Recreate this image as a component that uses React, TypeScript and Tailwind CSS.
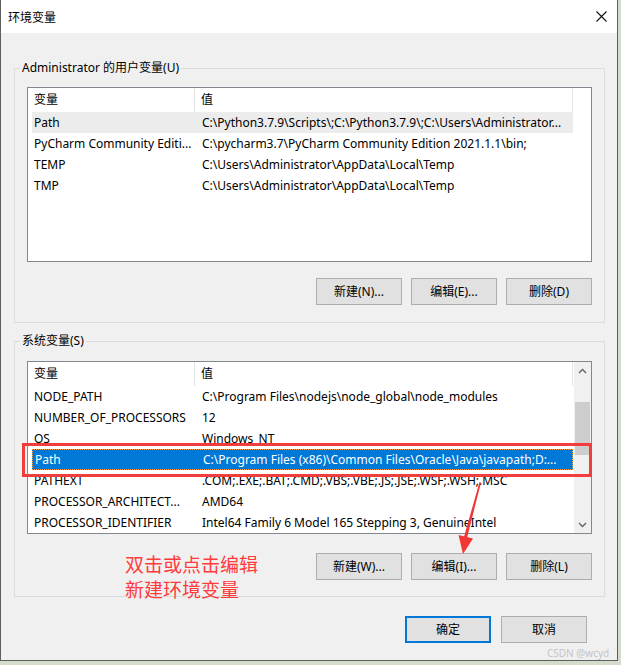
import React from 'react';

type Row = { name: string; value: string; state?: 'hover' | 'selected' };

const userRows: Row[] = [
  { name: 'Path', value: 'C:\\Python3.7.9\\Scripts\\;C:\\Python3.7.9\\;C:\\Users\\Administrator...', state: 'hover' },
  { name: 'PyCharm Community Editi...', value: 'C:\\pycharm3.7\\PyCharm Community Edition 2021.1.1\\bin;' },
  { name: 'TEMP', value: 'C:\\Users\\Administrator\\AppData\\Local\\Temp' },
  { name: 'TMP', value: 'C:\\Users\\Administrator\\AppData\\Local\\Temp' },
];

const systemRows: Row[] = [
  { name: 'NODE_PATH', value: 'C:\\Program Files\\nodejs\\node_global\\node_modules' },
  { name: 'NUMBER_OF_PROCESSORS', value: '12' },
  { name: 'OS', value: 'Windows_NT' },
  { name: 'Path', value: 'C:\\Program Files (x86)\\Common Files\\Oracle\\Java\\javapath;D:...', state: 'selected' },
  { name: 'PATHEXT', value: '.COM;.EXE;.BAT;.CMD;.VBS;.VBE;.JS;.JSE;.WSF;.WSH;.MSC' },
  { name: 'PROCESSOR_ARCHITECT...', value: 'AMD64' },
  { name: 'PROCESSOR_IDENTIFIER', value: 'Intel64 Family 6 Model 165 Stepping 3, GenuineIntel' },
];

const Button: React.FC<{ label: string; primary?: boolean }> = ({ label, primary }) => (
  <div
    className={
      primary
        ? 'w-[86px] h-[27px] bg-[#e1e1e1] border-2 border-[#0078d7] flex items-center justify-center text-[12px] text-black'
        : 'w-[86px] h-[27px] bg-[#e1e1e1] border border-[#adadad] flex items-center justify-center text-[12px] text-black'
    }
  >
    {label}
  </div>
);

const Chevron: React.FC<{ down?: boolean }> = ({ down }) => (
  <svg width="9" height="6" viewBox="0 0 9 6">
    <path
      d={down ? 'M1 1 L4.5 4.5 L8 1' : 'M1 5 L4.5 1.5 L8 5'}
      fill="none"
      stroke="#606060"
      strokeWidth="1.3"
    />
  </svg>
);

const VarList: React.FC<{ rows: Row[]; height: string; scroll?: boolean }> = ({ rows, height, scroll }) => (
  <div className={`${height} bg-white border border-[#828790] flex`}>
    <div className="flex-1 flex flex-col">
      <div className="h-[24px] flex shrink-0">
        <div className="w-[167px] pl-[6px] flex items-center border-r border-[#e5e5e5]">变量</div>
        <div className="w-[378px] pl-[6px] flex items-center border-r border-[#e5e5e5]">值</div>
      </div>
      {rows.map((r) => (
        <div
          key={r.name}
          className={
            r.state === 'selected'
              ? 'ml-[4px] w-[541px] h-[21px] flex items-center bg-[#0078d7] text-white border border-dotted border-[#ff9f45]'
              : r.state === 'hover'
                ? 'ml-[4px] w-[541px] h-[21px] flex items-center bg-[#ececec]'
                : 'ml-[4px] w-[541px] h-[21px] flex items-center'
          }
        >
          <div className="w-[164px] shrink-0 pl-[2px] whitespace-nowrap">{r.name}</div>
          <div className="pl-[6px] whitespace-nowrap">{r.value}</div>
        </div>
      ))}
    </div>
    {scroll ? (
      <div className="w-[17px] bg-[#f0f0f0] flex flex-col items-center">
        <div className="h-[17px] flex items-center justify-center">
          <Chevron />
        </div>
        <div className="mt-[23px] w-[15px] h-[53px] bg-[#cdcdcd]" />
        <div className="flex-1" />
        <div className="h-[17px] flex items-center justify-center">
          <Chevron down />
        </div>
      </div>
    ) : (
      <div className="w-[17px]" />
    )}
  </div>
);

export default function App() {
  return (
    <div className="w-[621px] h-[665px] bg-[#d4ddcd] font-['Noto_Sans','Noto_Sans_CJK_SC',sans-serif] text-[12px] text-black leading-[14px]">
      <div className="relative w-[618px] h-[661px] border-l border-r border-b border-[#5c605c] flex flex-col bg-[#f0f0f0]">
        <div className="h-[33px] bg-white flex items-center justify-between pl-[7px] pr-[10px] shrink-0">
          <span className="font-['Noto_Sans_CJK_SC',sans-serif]">环境变量</span>
          <svg width="11" height="11" viewBox="0 0 11 11">
            <path d="M0.5 0.5 L10.5 10.5 M10.5 0.5 L0.5 10.5" stroke="#111" strokeWidth="1.1" />
          </svg>
        </div>

        <div className="flex-1 flex flex-col pt-[28px] pl-[13px] pr-[12px]">
          <fieldset className="border border-[#dcdcdc] pb-[17px]">
            <legend className="ml-[5px] px-[2px] leading-[14px]">Administrator 的用户变量(U)</legend>
            <div className="px-[12px] pt-[12px]">
              <VarList rows={userRows} height="h-[175px]" />
              <div className="mt-[16px] flex justify-end gap-[9px]">
                <Button label="新建(N)..." />
                <Button label="编辑(E)..." />
                <Button label="删除(D)" />
              </div>
            </div>
          </fieldset>

          <fieldset className="mt-[11px] border border-[#dcdcdc] pb-[16px]">
            <legend className="ml-[5px] px-[2px] leading-[14px]">系统变量(S)</legend>
            <div className="px-[12px] pt-[13px]">
              <VarList rows={systemRows} height="h-[173px]" scroll />
              <div className="mt-[19px] flex justify-end gap-[9px]">
                <Button label="新建(W)..." />
                <Button label="编辑(I)..." />
                <Button label="删除(L)" />
              </div>
            </div>
          </fieldset>

          <div className="mt-[19px] flex justify-end gap-[10px] pr-[18px]">
            <Button label="确定" primary />
            <Button label="取消" />
          </div>
        </div>

        {/* annotation overlay */}
        <div className="absolute left-[21px] top-[443px] w-[570px] h-[34px] border-[3px] border-[#f23d3d]" />
        <div className="absolute left-[124px] top-[551px] text-[19px] leading-[25px] text-[#ff3b3b] font-['Noto_Sans_CJK_SC',sans-serif]">
          <div>双击或点击编辑</div>
          <div>新建环境变量</div>
        </div>
        <svg className="absolute left-[450px] top-[478px]" width="34" height="80" viewBox="0 0 34 80">
          <polygon points="28.5,4 30,4.6 16,60 12.8,59.6" fill="#f23535" />
          <polygon points="7.5,57 22,60.5 12,76" fill="#f23535" />
        </svg>
        <div className="absolute left-[546px] top-[647px] whitespace-nowrap text-[10px] leading-[12px] text-[#c4c4c4]">CSDN @wcyd</div>
      </div>
    </div>
  );
}
